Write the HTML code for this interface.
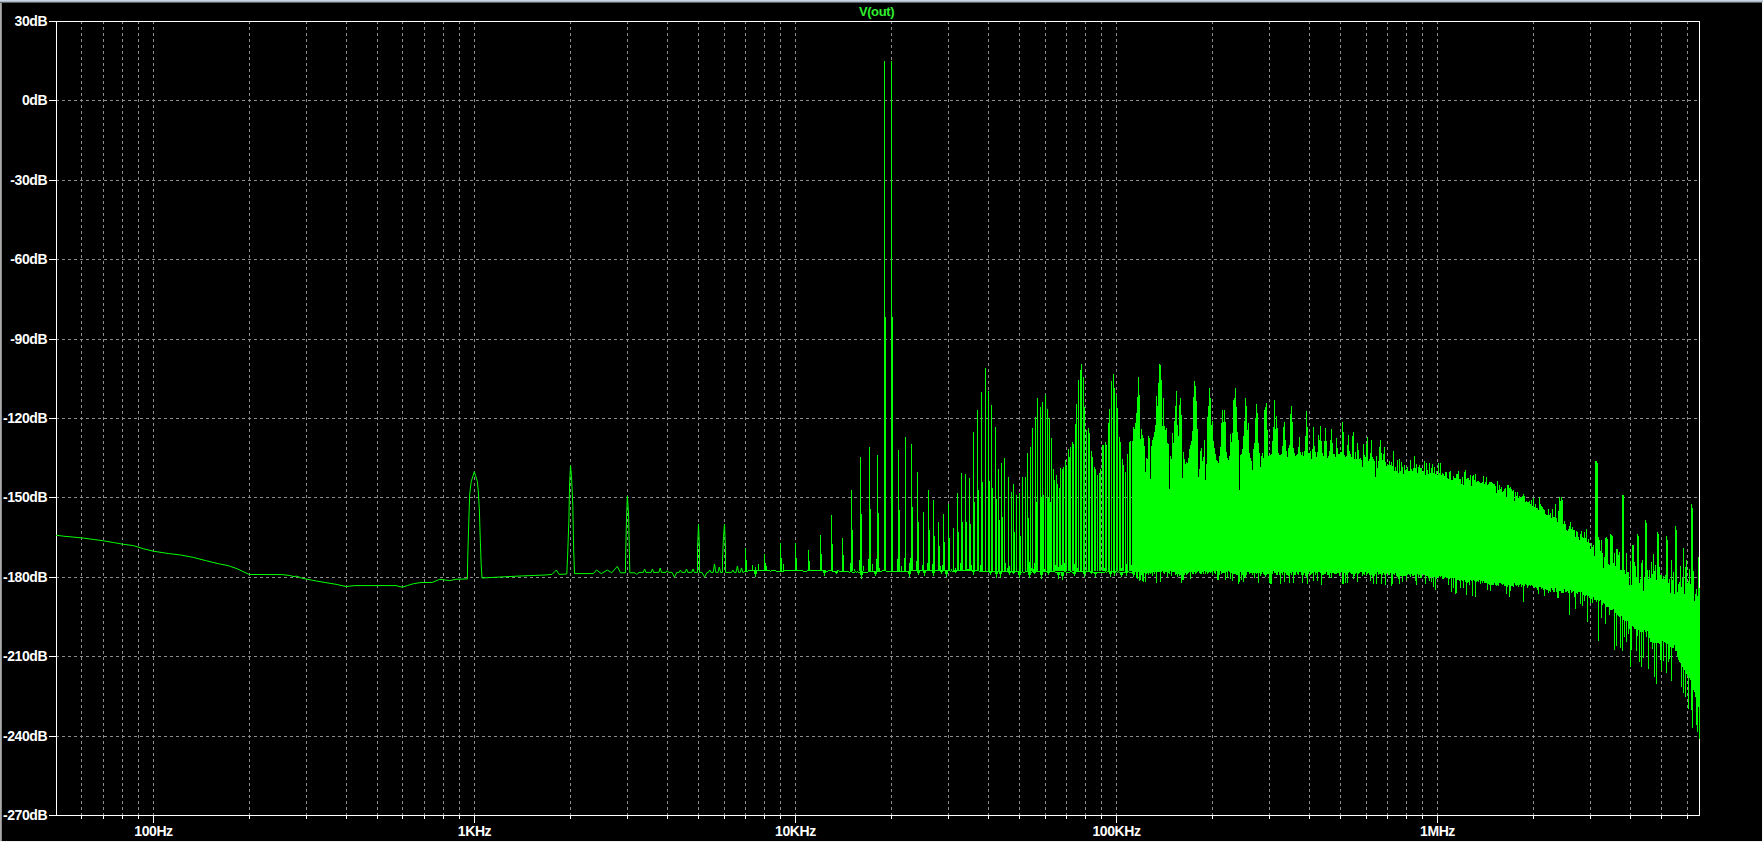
<!DOCTYPE html>
<html><head><meta charset="utf-8"><style>
html,body{margin:0;padding:0;background:#000;overflow:hidden}
body{width:1763px;height:842px;position:relative}
svg{position:absolute;left:0;top:0}
text{font-family:"Liberation Sans",sans-serif;font-weight:bold;font-size:14px;letter-spacing:-0.4px;fill:#fff}
</style></head><body>
<svg width="1763" height="842" viewBox="0 0 1763 842">
<rect x="0" y="0" width="1763" height="842" fill="#000"/>
<rect x="0" y="0" width="1763" height="1" fill="#c8d5e5"/>
<rect x="0" y="1" width="1763" height="1" fill="#a9b5c3"/>
<rect x="0" y="2" width="1763" height="1" fill="#5c6168"/>
<rect x="0" y="3" width="1" height="839" fill="#ababab"/>
<rect x="1" y="3" width="1" height="839" fill="#8a8a8a"/>
<rect x="1762" y="2" width="1" height="840" fill="#f6f6f6"/>
<rect x="0" y="841" width="1763" height="1" fill="#f2f2f2"/>
<path d="M56 100.5H1699M56 180.5H1699M56 259.5H1699M56 339.5H1699M56 418.5H1699M56 497.5H1699M56 577.5H1699M56 656.5H1699M56 736.5H1699M81.5 21V815M103.5 21V815M122.5 21V815M138.5 21V815M153.5 21V815M249.5 21V815M306.5 21V815M346.5 21V815M377.5 21V815M402.5 21V815M424.5 21V815M443.5 21V815M459.5 21V815M474.5 21V815M570.5 21V815M627.5 21V815M667.5 21V815M698.5 21V815M724.5 21V815M745.5 21V815M764.5 21V815M780.5 21V815M795.5 21V815M891.5 21V815M948.5 21V815M988.5 21V815M1019.5 21V815M1045.5 21V815M1066.5 21V815M1085.5 21V815M1101.5 21V815M1116.5 21V815M1212.5 21V815M1269.5 21V815M1309.5 21V815M1340.5 21V815M1366.5 21V815M1387.5 21V815M1406.5 21V815M1422.5 21V815M1437.5 21V815M1533.5 21V815M1590.5 21V815M1630.5 21V815M1661.5 21V815M1687.5 21V815" stroke="#8c8c8c" stroke-width="1" stroke-dasharray="3 3" fill="none" shape-rendering="crispEdges"/>
<path d="M56.5 21.5H1699.5V815.5H56.5ZM49 21.5H56M49 100.5H56M49 180.5H56M49 259.5H56M49 339.5H56M49 418.5H56M49 497.5H56M49 577.5H56M49 656.5H56M49 736.5H56M49 815.5H56M81.5 816V819M103.5 816V819M122.5 816V819M138.5 816V819M153.5 816V823M249.5 816V819M306.5 816V819M346.5 816V819M377.5 816V819M402.5 816V819M424.5 816V819M443.5 816V819M459.5 816V819M474.5 816V823M570.5 816V819M627.5 816V819M667.5 816V819M698.5 816V819M724.5 816V819M745.5 816V819M764.5 816V819M780.5 816V819M795.5 816V823M891.5 816V819M948.5 816V819M988.5 816V819M1019.5 816V819M1045.5 816V819M1066.5 816V819M1085.5 816V819M1101.5 816V819M1116.5 816V823M1212.5 816V819M1269.5 816V819M1309.5 816V819M1340.5 816V819M1366.5 816V819M1387.5 816V819M1406.5 816V819M1422.5 816V819M1437.5 816V823M1533.5 816V819M1590.5 816V819M1630.5 816V819M1661.5 816V819M1687.5 816V819" stroke="#fff" stroke-width="1" fill="none" shape-rendering="crispEdges"/>
<text x="47.2" y="25.6" text-anchor="end">30dB</text><text x="47.2" y="104.6" text-anchor="end">0dB</text><text x="47.2" y="184.6" text-anchor="end">-30dB</text><text x="47.2" y="263.6" text-anchor="end">-60dB</text><text x="47.2" y="343.6" text-anchor="end">-90dB</text><text x="47.2" y="422.6" text-anchor="end">-120dB</text><text x="47.2" y="501.6" text-anchor="end">-150dB</text><text x="47.2" y="581.6" text-anchor="end">-180dB</text><text x="47.2" y="660.6" text-anchor="end">-210dB</text><text x="47.2" y="740.6" text-anchor="end">-240dB</text><text x="47.2" y="819.6" text-anchor="end">-270dB</text><text x="153.5" y="836" text-anchor="middle">100Hz</text><text x="474.5" y="836" text-anchor="middle">1KHz</text><text x="795.5" y="836" text-anchor="middle">10KHz</text><text x="1116.5" y="836" text-anchor="middle">100KHz</text><text x="1437.5" y="836" text-anchor="middle">1MHz</text>
<text x="876.5" y="16" text-anchor="middle" style="fill:#2fee2f;font-size:13px">V(out)</text>
<polyline points="56.0,535.2 63.5,536.2 73.5,537.1 83.5,538.1 94.7,539.6 103.4,540.8 113.4,542.5 123.4,544.3 133.4,545.6 143.3,548.7 153.3,551.2 168.3,553.5 180.8,555.0 193.3,557.4 205.7,560.6 218.2,563.7 228.2,565.6 237.0,568.7 249.4,574.5 281.9,574.6 290.6,575.6 293.0,576.5 296.8,576.2 301.2,578.0 306.2,579.0 312.4,580.3 325.0,582.5 336.0,584.3 346.0,586.5 354.9,585.6 396.0,585.6 402.3,587.2 407.3,585.6 413.5,583.7 421.0,582.5 432.2,582.5 439.7,579.3 449.7,580.6 456.0,579.3 467.4,578.9 467.7,558.8 468.9,517.9 469.7,494.0 471.2,481.6 473.2,475.4 474.3,471.6 475.4,475.4 477.4,481.6 478.5,494.0 479.4,511.0 480.2,537.0 481.2,565.0 482.0,578.0 495.0,577.3 520.0,576.0 545.0,575.0 552.0,574.4 556.4,570.0 559.0,574.4 566.8,574.0 567.6,556.0 568.9,520.0 569.6,484.0 570.5,465.4 571.6,478.0 572.8,505.5 573.7,551.0 574.5,573.6 593.3,573.6 596.5,570.0 601.3,573.6 607.4,570.0 611.7,572.8 617.3,566.4 620.5,572.8 625.4,572.8 625.7,552.8 626.6,515.0 627.4,495.9 628.6,515.0 629.4,552.8 629.8,572.8 635.0,572.8 636.6,574.4 639.0,572.4 643.3,572.4 644.6,569.0 645.9,572.4 651.1,572.4 652.4,569.0 653.7,572.4 658.9,572.4 660.2,568.0 661.5,572.4 666.0,572.4 667.3,570.6 668.6,572.4 672.0,572.4 674.4,577.2 676.8,572.4 679.1,572.4 680.4,570.0 681.7,572.4 685.2,572.4 686.5,569.0 687.8,572.4 691.7,572.4 693.0,569.0 694.3,572.4 697.5,572.4 697.5,548.4 698.5,524.2 699.5,548.4 699.5,572.4 702.0,572.4 704.6,577.2 707.0,572.4 708.4,572.4 709.7,570.0 711.0,572.4 713.2,572.4 714.5,564.0 715.8,572.4 718.0,572.4 719.3,567.0 720.6,572.4 722.5,572.4 722.5,560.0 723.5,536.3 724.5,524.2 725.5,549.4 725.5,572.4 731.6,572.4 732.9,570.0 734.2,572.4 736.1,572.4 737.4,566.0 738.7,572.4 740.2,572.4 741.5,568.0 742.8,572.4 744.0,572.4" stroke="#00ff00" stroke-width="1" fill="none"/>
<path d="M744.5 571V572M745.5 571V572M745.5 548V571M746.5 571V572M746.5 560V571M747.5 571V572M748.5 570V571M749.5 570V571M750.5 570V571M751.5 570V571M752.5 570V571M752.5 565V571M753.5 570V571M754.5 570V571M754.5 570V574M755.5 570V577M755.5 570V571M755.5 567V571M756.5 570V574M756.5 570V571M757.5 570V571M758.5 570V571M758.5 564V571M759.5 570V571M760.5 570V571M761.5 570V571M762.5 570V571M763.5 570V571M764.5 570V571M764.5 554V571M765.5 570V571M765.5 563V571M766.5 570V571M766.5 566V571M767.5 570V571M768.5 570V571M769.5 570V571M770.5 571V572M771.5 570V571M772.5 570V571M773.5 570V571M774.5 570V571M775.5 570V571M776.5 571V572M777.5 571V572M778.5 571V572M779.5 571V572M780.5 571V572M780.5 543V571M781.5 571V572M781.5 558V571M782.5 571V572M783.5 571V572M783.5 564V571M784.5 570V571M785.5 570V571M786.5 570V571M787.5 570V571M788.5 570V571M789.5 570V571M790.5 570V571M791.5 570V571M792.5 570V571M793.5 570V571M794.5 570V571M795.5 570V571M795.5 543V571M796.5 570V571M796.5 558V571M797.5 570V571M798.5 570V571M799.5 570V571M800.5 570V571M801.5 570V571M802.5 570V571M803.5 571V572M804.5 571V572M805.5 571V572M806.5 571V572M807.5 570V571M808.5 570V571M808.5 550V571M809.5 570V571M809.5 561V571M810.5 570V571M811.5 570V571M812.5 570V571M813.5 570V571M814.5 570V571M815.5 570V571M816.5 570V571M817.5 570V571M818.5 570V571M819.5 570V571M820.5 570V571M820.5 535V571M821.5 570V571M821.5 554V571M822.5 570V571M823.5 570V571M823.5 570V573M824.5 570V576M824.5 570V571M825.5 570V573M825.5 571V572M826.5 571V572M827.5 571V572M828.5 570V571M829.5 570V571M830.5 570V571M831.5 570V571M831.5 515V571M832.5 571V572M832.5 544V571M833.5 571V572M834.5 571V572M835.5 571V572M835.5 571V573M836.5 571V574M836.5 571V572M837.5 571V573M837.5 570V571M838.5 570V571M839.5 571V572M840.5 571V572M841.5 571V572M842.5 571V572M842.5 538V571M843.5 571V572M843.5 555V571M844.5 571V572M845.5 571V572M846.5 571V572M847.5 571V572M848.5 571V572M849.5 572V573M850.5 571V572M850.5 563V571M851.5 571V572M851.5 490V571M852.5 572V573M852.5 530V571M853.5 572V573M854.5 572V573M854.5 569V571M855.5 571V572M856.5 572V573M857.5 571V572M858.5 572V573M859.5 572V573M859.5 560V571M860.5 571V572M860.5 571V575M860.5 457V571M861.5 571V579M861.5 572V573M861.5 514V571M862.5 571V575M862.5 572V573M863.5 572V573M863.5 566V571M864.5 572V573M865.5 572V573M866.5 572V573M867.5 572V573M868.5 571V572M868.5 559V571M868.5 568V571M869.5 571V572M869.5 447V571M870.5 571V572M870.5 509V571M871.5 571V572M872.5 571V572M872.5 564V571M873.5 571V572M874.5 571V572M874.5 571V574M875.5 571V576M875.5 571V572M876.5 571V574M876.5 571V572M876.5 559V571M876.5 569V571M877.5 571V572M877.5 455V571M878.5 571V572M878.5 513V571M879.5 571V572M879.5 568V571M880.5 571V572M881.5 571V572M882.5 570V571M883.5 570V571M884.5 570V571M884.5 61V571M885.5 570V571M885.5 317V571M886.5 571V572M887.5 571V572M888.5 571V572M889.5 571V572M890.5 571V572M891.5 571V572M891.5 61V571M892.5 571V572M892.5 317V571M893.5 571V572M894.5 571V572M895.5 571V572M896.5 571V572M897.5 571V572M897.5 559V571M898.5 571V572M898.5 450V571M899.5 571V572M899.5 510V571M900.5 571V572M901.5 571V572M901.5 566V571M902.5 571V572M903.5 571V572M904.5 571V572M904.5 558V571M905.5 571V572M905.5 437V571M905.5 504V571M906.5 571V572M907.5 571V572M908.5 571V572M908.5 571V574M909.5 571V577M909.5 571V572M909.5 563V571M910.5 571V574M910.5 570V571M910.5 558V571M911.5 570V571M911.5 444V571M912.5 570V571M912.5 507V571M913.5 570V571M914.5 570V571M915.5 570V571M916.5 570V571M916.5 561V571M917.5 570V571M917.5 570V573M917.5 472V571M918.5 570V575M918.5 570V571M918.5 522V571M919.5 570V573M919.5 571V572M920.5 570V571M921.5 570V571M922.5 570V571M922.5 565V571M922.5 567V571M923.5 570V571M923.5 570V573M923.5 512V571M923.5 542V571M923.5 567V571M924.5 570V576M924.5 570V571M925.5 570V573M925.5 570V571M926.5 570V571M927.5 570V571M927.5 563V571M928.5 570V571M928.5 490V571M929.5 570V571M929.5 530V571M930.5 570V571M931.5 570V571M932.5 570V571M932.5 570V573M932.5 564V571M933.5 570V576M933.5 570V571M933.5 500V571M934.5 570V573M934.5 570V571M934.5 536V571M935.5 570V571M936.5 570V571M937.5 570V571M938.5 570V571M938.5 522V571M938.5 566V571M939.5 570V571M939.5 546V571M940.5 570V571M940.5 570V572M940.5 566V571M941.5 570V574M941.5 570V571M942.5 570V572M942.5 570V571M942.5 565V571M942.5 569V571M943.5 570V571M943.5 514V571M944.5 570V571M944.5 542V571M945.5 570V571M945.5 570V574M946.5 570V577M946.5 570V571M947.5 570V574M947.5 570V571M948.5 570V571M948.5 504V571M949.5 570V571M949.5 538V571M949.5 566V571M950.5 571V572M951.5 570V571M951.5 569V571M952.5 571V572M953.5 571V572M953.5 528V571M953.5 550V571M954.5 570V571M954.5 570V572M955.5 570V573M955.5 570V571M955.5 568V571M956.5 570V572M956.5 570V571M957.5 570V571M957.5 493V571M958.5 570V571M958.5 532V571M959.5 570V571M960.5 570V571M960.5 563V571M961.5 570V571M961.5 473V571M962.5 570V571M962.5 522V571M963.5 570V571M964.5 570V571M965.5 570V571M965.5 474V571M966.5 570V571M966.5 522V571M967.5 570V571M967.5 569V571M968.5 570V571M968.5 569V571M969.5 570V571M969.5 478V571M969.5 568V571M970.5 570V571M970.5 524V571M971.5 570V571M971.5 565V571M972.5 570V571M972.5 570V572M973.5 570V575M973.5 570V571M973.5 432V571M973.5 566V571M974.5 570V572M974.5 570V571M974.5 502V571M975.5 570V571M976.5 570V571M977.5 570V571M977.5 410V571M978.5 570V571M978.5 490V571M979.5 571V572M980.5 571V572M980.5 565V571M981.5 571V572M981.5 392V571M982.5 571V572M982.5 482V571M983.5 571V572M984.5 571V572M985.5 571V572M985.5 368V571M985.5 470V571M986.5 571V572M987.5 571V572M988.5 571V572M988.5 391V571M988.5 564V571M989.5 571V572M989.5 571V573M989.5 481V571M989.5 562V571M990.5 571V575M990.5 571V572M991.5 571V573M991.5 571V572M991.5 405V571M992.5 571V572M992.5 488V571M992.5 563V571M993.5 571V572M994.5 571V572M995.5 571V572M995.5 571V574M995.5 427V571M996.5 571V578M996.5 571V572M996.5 499V571M996.5 565V571M997.5 571V574M997.5 571V572M998.5 571V572M998.5 469V571M999.5 571V572M999.5 571V574M999.5 520V571M1000.5 571V578M1000.5 571V572M1001.5 571V574M1001.5 571V572M1001.5 463V571M1002.5 571V572M1002.5 517V571M1003.5 571V572M1004.5 571V572M1004.5 458V571M1004.5 565V571M1005.5 571V572M1005.5 563V571M1006.5 571V572M1007.5 571V572M1007.5 568V571M1008.5 571V572M1008.5 571V573M1008.5 477V571M1009.5 571V575M1009.5 571V572M1009.5 566V571M1010.5 571V573M1010.5 571V572M1011.5 571V572M1011.5 492V571M1011.5 536V571M1012.5 571V572M1012.5 571V573M1013.5 571V574M1013.5 571V572M1013.5 484V571M1014.5 571V573M1014.5 571V572M1014.5 532V571M1015.5 571V572M1016.5 571V572M1016.5 495V571M1017.5 571V572M1018.5 571V572M1018.5 571V575M1019.5 571V578M1019.5 571V572M1019.5 493V571M1019.5 569V571M1020.5 571V575M1020.5 571V572M1020.5 536V571M1021.5 572V573M1022.5 571V572M1022.5 477V571M1023.5 572V573M1024.5 572V573M1025.5 571V572M1025.5 477V571M1025.5 529V571M1026.5 571V572M1027.5 571V572M1027.5 453V571M1027.5 569V571M1028.5 571V572M1028.5 571V575M1028.5 518V571M1028.5 565V571M1029.5 571V578M1029.5 571V572M1029.5 562V571M1030.5 571V575M1030.5 571V572M1030.5 447V571M1031.5 572V573M1031.5 568V571M1032.5 571V572M1032.5 428V571M1033.5 571V572M1033.5 571V573M1033.5 569V571M1034.5 571V574M1034.5 571V572M1034.5 563V571M1035.5 571V573M1035.5 571V572M1035.5 417V571M1036.5 571V572M1036.5 502V571M1036.5 562V571M1037.5 571V572M1037.5 398V571M1038.5 571V572M1039.5 571V572M1040.5 571V572M1040.5 571V575M1040.5 407V571M1041.5 571V579M1041.5 571V572M1041.5 497V571M1042.5 571V575M1042.5 571V572M1042.5 402V571M1043.5 571V572M1043.5 495V571M1044.5 571V572M1044.5 569V571M1045.5 571V572M1045.5 395V571M1045.5 492V571M1046.5 571V572M1047.5 571V572M1047.5 571V573M1047.5 409V571M1048.5 571V575M1048.5 571V572M1048.5 498V571M1048.5 564V571M1049.5 571V573M1049.5 571V572M1049.5 418V571M1050.5 571V572M1050.5 502V571M1051.5 571V572M1051.5 438V571M1052.5 571V572M1053.5 571V572M1053.5 469V571M1054.5 571V572M1054.5 480V571M1055.5 572V573M1055.5 565V571M1056.5 572V573M1056.5 475V571M1057.5 572V573M1057.5 572V575M1057.5 484V571M1058.5 572V579M1058.5 572V573M1058.5 567V571M1059.5 572V575M1059.5 572V573M1059.5 488V571M1060.5 572V573M1060.5 468V571M1061.5 572V573M1061.5 572V576M1061.5 565V571M1062.5 572V580M1062.5 572V573M1062.5 469V571M1063.5 572V576M1063.5 572V573M1063.5 467V571M1064.5 571V572M1064.5 563V571M1065.5 571V572M1065.5 460V571M1066.5 572V573M1066.5 466V571M1067.5 572V573M1068.5 572V573M1068.5 449V571M1069.5 572V573M1069.5 457V571M1070.5 571V572M1070.5 447V571M1071.5 571V572M1072.5 572V573M1072.5 442V571M1073.5 572V573M1073.5 572V574M1073.5 444V571M1074.5 572V576M1074.5 571V572M1074.5 564V571M1075.5 572V574M1075.5 571V572M1075.5 424V571M1076.5 571V572M1076.5 404V571M1077.5 571V572M1077.5 568V571M1078.5 571V572M1078.5 380V571M1079.5 571V572M1080.5 571V572M1080.5 370V571M1081.5 571V572M1081.5 364V571M1082.5 571V572M1083.5 571V572M1083.5 571V574M1083.5 377V571M1084.5 571V577M1084.5 571V572M1084.5 407V571M1085.5 571V574M1085.5 571V572M1086.5 571V572M1086.5 430V571M1087.5 571V572M1088.5 571V572M1088.5 428V571M1089.5 571V572M1089.5 433V571M1090.5 571V572M1090.5 571V573M1091.5 571V574M1091.5 571V572M1091.5 451V571M1092.5 571V573M1092.5 572V573M1092.5 457V571M1093.5 572V573M1094.5 572V573M1094.5 572V574M1094.5 467V571M1095.5 572V577M1095.5 572V573M1095.5 469V571M1096.5 572V574M1096.5 572V573M1097.5 572V573M1097.5 475V571M1098.5 572V573M1099.5 572V573M1099.5 473V571M1100.5 572V573M1100.5 469V571M1101.5 572V573M1102.5 572V573M1102.5 445V571M1103.5 572V573M1103.5 445V571M1104.5 572V573M1104.5 568V571M1105.5 571V572M1105.5 442V571M1106.5 572V573M1106.5 445V571M1107.5 571V572M1108.5 571V572M1108.5 423V571M1109.5 571V572M1109.5 571V574M1109.5 409V571M1110.5 571V577M1110.5 571V572M1111.5 571V574M1111.5 571V572M1111.5 381V571M1112.5 571V572M1113.5 571V572M1113.5 571V573M1113.5 374V571M1114.5 571V576M1114.5 571V572M1114.5 388V571M1115.5 571V573M1115.5 571V572M1116.5 571V572M1116.5 395V571M1117.5 572V573M1117.5 408V571M1118.5 571V572M1119.5 572V573M1119.5 437V571M1120.5 572V573M1120.5 572V575M1120.5 442V571M1121.5 572V577M1121.5 572V573M1121.5 568V571M1122.5 572V575M1122.5 572V573M1122.5 459V571M1123.5 572V573M1123.5 465V571M1124.5 572V573M1125.5 571V572M1125.5 571V573M1125.5 472V571M1126.5 571V576M1126.5 571V572M1126.5 564V571M1127.5 571V573M1127.5 572V573M1127.5 454V571M1128.5 571V572M1129.5 572V573M1129.5 442V571M1130.5 572V573M1130.5 441V571M1131.5 572V573M1131.5 565V571M1132.5 572V573M1132.5 441V574M1133.5 427V577M1134.5 429V575M1135.5 423V572M1136.5 413V578M1137.5 413V579M1137.5 397V570M1138.5 382V572M1138.5 377V570M1139.5 395V581M1140.5 439V580M1141.5 429V575M1142.5 435V581M1143.5 438V582M1144.5 446V573M1145.5 472V582M1146.5 458V574M1147.5 459V573M1148.5 436V575M1149.5 438V573M1150.5 479V574M1151.5 446V573M1152.5 440V576M1153.5 437V572M1154.5 432V574M1155.5 425V572M1156.5 396V583M1157.5 406V572M1158.5 383V572M1159.5 364V572M1160.5 372V582M1160.5 365V570M1161.5 389V572M1161.5 380V570M1162.5 426V571M1163.5 398V573M1164.5 426V574M1165.5 430V572M1166.5 428V572M1167.5 443V577M1168.5 444V573M1169.5 489V574M1170.5 456V571M1171.5 459V576M1172.5 433V572M1173.5 443V572M1174.5 421V572M1175.5 406V575M1175.5 414V570M1176.5 391V574M1176.5 398V570M1177.5 425V577M1178.5 436V574M1179.5 405V576M1180.5 408V575M1180.5 398V570M1181.5 424V583M1181.5 415V570M1182.5 478V580M1183.5 452V580M1184.5 459V575M1185.5 464V573M1186.5 462V575M1187.5 463V574M1188.5 458V573M1189.5 449V572M1190.5 445V579M1191.5 441V572M1192.5 431V574M1193.5 397V574M1194.5 381V572M1195.5 394V574M1195.5 386V570M1196.5 410V573M1196.5 401V570M1197.5 429V572M1198.5 477V571M1199.5 469V573M1200.5 451V574M1201.5 448V574M1202.5 461V572M1203.5 457V574M1204.5 440V571M1205.5 480V574M1206.5 464V572M1207.5 417V574M1208.5 406V573M1209.5 391V572M1209.5 388V570M1210.5 418V573M1210.5 398V570M1211.5 425V572M1212.5 421V575M1213.5 441V571M1214.5 448V573M1215.5 454V574M1216.5 460V571M1217.5 461V580M1218.5 463V580M1219.5 456V575M1220.5 447V571M1221.5 423V574M1221.5 426V570M1222.5 410V573M1222.5 410V570M1223.5 422V573M1224.5 413V573M1224.5 410V570M1225.5 422V580M1225.5 430V570M1226.5 452V572M1227.5 458V578M1228.5 460V571M1229.5 456V572M1230.5 434V579M1231.5 442V573M1232.5 433V581M1233.5 400V574M1234.5 398V574M1235.5 435V574M1235.5 388V570M1236.5 413V575M1236.5 407V570M1237.5 432V575M1238.5 440V584M1239.5 490V582M1240.5 455V572M1241.5 454V580M1242.5 449V575M1243.5 436V582M1244.5 421V577M1245.5 404V578M1245.5 398V570M1246.5 406V575M1246.5 416V570M1247.5 430V572M1248.5 423V572M1249.5 453V574M1250.5 458V573M1251.5 461V573M1252.5 470V575M1253.5 449V573M1254.5 443V578M1255.5 418V573M1256.5 404V574M1256.5 404V570M1257.5 415V573M1257.5 413V570M1258.5 443V583M1259.5 453V573M1260.5 467V576M1261.5 456V574M1262.5 453V572M1263.5 458V574M1264.5 410V575M1265.5 407V577M1265.5 422V570M1266.5 410V575M1266.5 403V570M1267.5 430V574M1268.5 456V574M1269.5 455V583M1270.5 455V584M1271.5 454V584M1272.5 441V574M1273.5 427V571M1274.5 400V573M1274.5 416V570M1275.5 429V573M1275.5 434V570M1276.5 416V575M1276.5 416V570M1277.5 431V575M1277.5 428V570M1278.5 453V572M1279.5 455V575M1280.5 455V584M1281.5 454V573M1282.5 446V575M1283.5 427V572M1283.5 438V570M1284.5 443V582M1284.5 422V570M1285.5 440V573M1286.5 451V575M1287.5 457V575M1288.5 448V576M1289.5 445V583M1290.5 414V573M1290.5 421V570M1291.5 409V575M1291.5 406V570M1292.5 422V572M1293.5 448V583M1294.5 453V575M1295.5 456V575M1296.5 455V572M1297.5 454V574M1298.5 447V575M1298.5 454V570M1299.5 455V572M1299.5 437V570M1300.5 452V572M1301.5 455V575M1302.5 452V583M1303.5 456V575M1304.5 451V573M1305.5 436V576M1306.5 433V577M1306.5 411V570M1307.5 440V584M1307.5 427V570M1308.5 453V574M1309.5 453V572M1310.5 451V575M1311.5 459V574M1312.5 449V573M1313.5 433V581M1313.5 427V570M1314.5 454V572M1314.5 446V570M1315.5 452V575M1316.5 457V573M1317.5 452V581M1318.5 435V572M1319.5 440V572M1320.5 431V573M1320.5 426V570M1321.5 451V585M1321.5 441V570M1322.5 453V575M1323.5 456V575M1324.5 454V574M1324.5 441V570M1325.5 441V574M1325.5 428V570M1326.5 441V572M1327.5 458V575M1328.5 456V575M1329.5 451V578M1330.5 440V573M1330.5 441V570M1331.5 433V578M1331.5 429V570M1332.5 443V573M1333.5 454V573M1334.5 454V574M1335.5 457V574M1336.5 442V574M1336.5 438V570M1337.5 448V573M1337.5 456V570M1338.5 454V573M1339.5 454V576M1340.5 452V573M1341.5 452V572M1342.5 434V584M1342.5 422V570M1343.5 442V584M1343.5 432V570M1344.5 455V573M1345.5 457V583M1346.5 456V575M1346.5 460V570M1347.5 448V583M1347.5 445V570M1348.5 435V573M1349.5 451V572M1350.5 454V573M1351.5 457V574M1352.5 436V574M1352.5 445V570M1353.5 444V579M1353.5 432V570M1354.5 459V576M1355.5 452V574M1356.5 459V573M1357.5 456V582M1357.5 443V570M1358.5 450V574M1358.5 462V570M1359.5 459V573M1360.5 458V572M1361.5 460V572M1362.5 467V576M1363.5 456V574M1363.5 444V570M1364.5 455V575M1364.5 455V570M1365.5 457V572M1366.5 444V575M1366.5 453V570M1367.5 444V574M1367.5 437V570M1368.5 461V573M1369.5 459V575M1370.5 453V581M1370.5 453V570M1371.5 450V575M1371.5 440V570M1372.5 457V577M1373.5 459V584M1374.5 461V576M1375.5 477V574M1376.5 456V584M1377.5 468V572M1378.5 461V575M1379.5 447V574M1380.5 447V574M1380.5 440V570M1381.5 460V584M1381.5 453V570M1382.5 460V575M1383.5 454V573M1383.5 460V570M1384.5 457V575M1384.5 447V570M1385.5 462V585M1386.5 466V574M1387.5 464V573M1388.5 465V575M1389.5 461V575M1390.5 465V573M1391.5 462V586M1392.5 466V584M1393.5 451V574M1394.5 471V575M1395.5 467V573M1396.5 471V576M1397.5 460V577M1398.5 473V579M1399.5 459V584M1400.5 471V576M1401.5 462V576M1402.5 467V582M1403.5 474V576M1404.5 465V576M1405.5 470V576M1406.5 469V580M1407.5 467V575M1408.5 471V574M1409.5 471V575M1410.5 460V577M1411.5 469V574M1412.5 471V576M1413.5 468V576M1414.5 456V575M1415.5 468V581M1416.5 464V585M1417.5 473V574M1418.5 467V577M1419.5 465V575M1420.5 468V578M1421.5 468V578M1422.5 472V574M1423.5 471V575M1424.5 461V575M1425.5 475V584M1426.5 463V576M1427.5 470V576M1428.5 474V578M1429.5 463V581M1430.5 473V577M1431.5 468V582M1432.5 464V577M1433.5 473V587M1434.5 467V577M1435.5 474V590M1436.5 471V579M1437.5 475V577M1438.5 463V578M1439.5 473V576M1440.5 463V577M1441.5 475V576M1442.5 473V579M1443.5 474V579M1444.5 476V578M1445.5 472V577M1446.5 472V578M1447.5 478V578M1448.5 479V585M1449.5 472V579M1450.5 471V578M1451.5 480V592M1452.5 480V578M1453.5 476V588M1454.5 478V578M1455.5 478V594M1456.5 474V593M1457.5 474V580M1458.5 471V580M1459.5 479V581M1460.5 479V588M1461.5 484V580M1462.5 477V581M1463.5 485V588M1464.5 472V580M1465.5 470V582M1466.5 479V595M1467.5 478V583M1468.5 478V582M1469.5 480V585M1470.5 475V580M1471.5 486V581M1472.5 476V596M1473.5 475V580M1474.5 480V581M1475.5 474V597M1476.5 482V582M1477.5 481V581M1478.5 481V582M1479.5 482V580M1480.5 483V584M1481.5 483V581M1482.5 482V583M1483.5 476V581M1484.5 484V583M1485.5 482V583M1486.5 477V583M1487.5 485V590M1488.5 484V584M1489.5 482V585M1490.5 482V591M1491.5 482V585M1492.5 483V585M1493.5 484V585M1494.5 484V583M1495.5 486V585M1496.5 493V586M1497.5 481V585M1498.5 490V586M1499.5 485V583M1500.5 489V583M1501.5 487V584M1502.5 492V585M1503.5 491V584M1504.5 489V586M1505.5 488V586M1506.5 497V594M1507.5 485V587M1508.5 485V585M1509.5 488V597M1510.5 487V591M1511.5 489V586M1512.5 491V586M1513.5 490V587M1514.5 501V583M1515.5 492V585M1516.5 496V586M1517.5 492V585M1518.5 498V587M1519.5 496V585M1520.5 498V584M1521.5 497V587M1522.5 496V585M1523.5 494V602M1524.5 496V586M1525.5 502V584M1526.5 501V585M1527.5 502V588M1528.5 502V586M1529.5 501V585M1530.5 504V586M1531.5 500V585M1532.5 506V586M1533.5 498V587M1534.5 507V588M1535.5 504V587M1536.5 508V588M1537.5 508V590M1538.5 510V594M1539.5 497V587M1540.5 504V587M1541.5 506V589M1542.5 507V588M1543.5 509V590M1544.5 510V596M1545.5 514V589M1546.5 515V590M1547.5 515V590M1548.5 509V593M1549.5 515V591M1550.5 513V592M1551.5 518V588M1552.5 509V590M1553.5 517V592M1554.5 517V592M1555.5 504V588M1556.5 518V592M1557.5 522V598M1558.5 511V598M1559.5 528V590M1559.5 497V591M1560.5 525V590M1560.5 501V591M1561.5 524V593M1561.5 497V591M1562.5 521V593M1562.5 500V591M1563.5 524V593M1564.5 521V589M1565.5 524V592M1566.5 530V592M1567.5 531V591M1568.5 529V593M1569.5 526V615M1570.5 522V590M1571.5 529V593M1572.5 527V592M1573.5 530V591M1574.5 530V597M1575.5 537V609M1576.5 531V593M1577.5 532V594M1578.5 537V592M1579.5 540V592M1580.5 534V604M1581.5 531V592M1582.5 537V606M1583.5 538V595M1584.5 532V601M1585.5 538V596M1586.5 529V595M1587.5 542V622M1588.5 539V596M1589.5 543V598M1590.5 549V603M1591.5 543V599M1592.5 547V603M1593.5 545V597M1594.5 556V600M1595.5 541V600M1595.5 461V599M1596.5 566V602M1596.5 461V599M1596.5 461V600M1597.5 553V598M1597.5 463V600M1598.5 537V603M1598.5 596V641M1599.5 540V601M1600.5 551V600M1601.5 568V618M1601.5 540V603M1602.5 553V605M1603.5 568V603M1604.5 557V604M1605.5 557V624M1605.5 538V605M1606.5 560V607M1606.5 537V606M1606.5 538V605M1607.5 547V607M1607.5 539V606M1608.5 564V607M1609.5 565V615M1610.5 576V610M1610.5 534V609M1611.5 561V609M1611.5 535V610M1611.5 536V609M1612.5 564V608M1612.5 536V610M1613.5 563V609M1614.5 553V620M1614.5 607V650M1615.5 566V613M1616.5 549V646M1617.5 549V615M1618.5 568V616M1618.5 555V616M1619.5 552V617M1620.5 570V648M1621.5 570V616M1622.5 550V651M1622.5 495V618M1623.5 571V620M1623.5 495V618M1624.5 570V637M1625.5 574V621M1626.5 572V642M1626.5 553V622M1627.5 572V621M1628.5 572V634M1629.5 585V629M1630.5 561V622M1630.5 619V667M1631.5 585V650M1632.5 576V624M1632.5 545V626M1633.5 578V625M1633.5 545V627M1634.5 562V629M1635.5 566V629M1636.5 577V651M1637.5 558V636M1637.5 534V630M1638.5 580V630M1638.5 536V630M1639.5 583V662M1640.5 579V632M1641.5 563V629M1641.5 626V667M1642.5 570V632M1642.5 560V631M1643.5 591V658M1644.5 577V630M1645.5 572V631M1645.5 520V632M1646.5 562V637M1646.5 523V632M1647.5 570V631M1648.5 579V669M1649.5 570V638M1650.5 578V642M1651.5 562V642M1652.5 574V649M1653.5 581V643M1653.5 554V643M1654.5 571V667M1654.5 638V677M1655.5 565V643M1656.5 580V655M1656.5 638V684M1657.5 565V641M1657.5 532V643M1658.5 579V643M1658.5 534V643M1659.5 567V644M1660.5 575V660M1661.5 575V641M1661.5 638V671M1662.5 579V641M1663.5 576V661M1664.5 579V642M1665.5 575V643M1666.5 594V645M1666.5 536V644M1666.5 639V673M1667.5 590V643M1667.5 540V644M1668.5 583V662M1669.5 579V659M1670.5 593V647M1671.5 589V644M1671.5 560V646M1671.5 641V681M1672.5 580V648M1673.5 572V648M1674.5 594V645M1675.5 585V649M1675.5 526V651M1676.5 585V650M1676.5 530V651M1677.5 592V657M1678.5 584V660M1679.5 582V662M1680.5 566V663M1681.5 587V678M1681.5 661V687M1682.5 578V667M1683.5 584V693M1683.5 548V669M1684.5 594V670M1685.5 567V673M1685.5 668V697M1686.5 584V673M1686.5 560V674M1687.5 583V676M1688.5 581V709M1688.5 672V694M1689.5 569V678M1690.5 584V680M1691.5 585V710M1691.5 504V684M1692.5 573V684M1692.5 508V684M1692.5 680V728M1693.5 571V690M1694.5 601V692M1695.5 594V697M1696.5 589V718M1696.5 698V725M1697.5 596V732M1698.5 604V705M1698.5 557V707M1699.5 588V739" stroke="#00ff00" stroke-width="1" fill="none" shape-rendering="crispEdges"/>
</svg>
</body></html>
